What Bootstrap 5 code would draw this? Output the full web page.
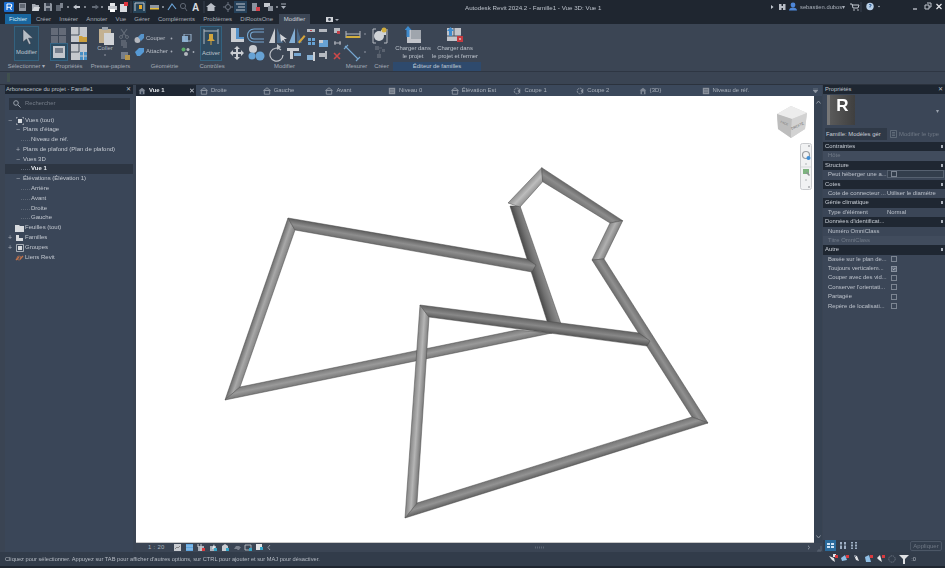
<!DOCTYPE html>
<html lang="fr">
<head>
  <meta charset="UTF-8" />
  <meta name="viewport" content="width=device-width, initial-scale=1.0" />
  <title>Autodesk Revit 2024.2 - Famille1 - Vue 3D: Vue 1</title>
  <link href="https://cdn.jsdelivr.net/npm/bootstrap@5.3.0/dist/css/bootstrap.min.css" rel="stylesheet">
  <style>
    html, body { height: 100%; }
    body {
      width: 945px; height: 568px; overflow: hidden; margin: 0;
      background: #3a4453; color: #c9ced6;
      font: 5.9px/1 "Liberation Sans", "Open Sans", sans-serif;
      filter: blur(.3px);
    }
    svg { display: block; flex: none; }
    /* Title bar + menu */
    .title-bar { height: 14px; background: #1f2630; }
    .qat-strip { width: 300px; height: 14px; }
    .app-title { position: absolute; left: 465px; top: 5px; color: #bcc2cb; font-size: 6.2px; white-space: nowrap; }
    .user-name { position: absolute; left: 800px; top: 5px; color: #a9b0ba; font-size: 5.8px; }
    .menu-bar { height: 10px; background: #1f2630; padding-left: 5px; }
    .menu-tab { height: 10px; line-height: 10px; color: #a8aeb8; white-space: nowrap; font-size: 6px; }
    .menu-file { width: 26px; background: #19669f; color: #d8e6f2; text-align: center; margin-right: 5px; }
    .menu-list { gap: 8.3px; }
    .menu-active { width: 31px; background: #3b4554; color: #ccd1d8; text-align: center; margin-left: 6px; }
    /* Ribbon */
    .ribbon { height: 47px; background: #3b4554; padding-left: 5px; }
    .rb-group { display: flex; flex-direction: column; flex: none; }
    .rb-body { height: 38px; position: relative; }
    .rb-body svg { opacity: .88; }
    .rb-label { height: 9px; line-height: 9px; text-align: center; color: #a4abb6; white-space: nowrap; }
    .rb-label-blue { background: #2e4a6d; color: #c0cad8; }
    .big-btn { position: absolute; top: 2px; height: 35px; background: #2f4a5f; border: 1px solid #33627f; color: #bfc6cf; text-align: center; }
    .big-btn svg { margin: 1px auto 0; }
    .geo-row { height: 13px; padding-left: 3px; color: #b8bec7; }
    .geo-row span { width: 24px; margin-left: 1px; }
    .load-btn { position: absolute; top: 2px; text-align: center; color: #bcc3cc; line-height: 8px; white-space: nowrap; }
    .load-btn svg { margin: 0 auto 1px; }
    .option-bar { height: 13px; background: #3a4453; border-top: 1px solid #2e3643; }
    .option-stub { width: 3px; height: 9px; margin: 1px 0 0 7px; background: #40504e; }
    .band-dark { height: 1px; background: #2b323d; }
    /* Work area */
    .work-area { height: 467px; padding-left: 5px; }
    .panel-head { height: 9px; line-height: 9px; background: #1e2631; color: #bcc2cb; padding: 0 2px 0 1px; font-size: 5.8px; }
    .panel-left { width: 128px; background: #3a4658; margin-right: 3px; }
    .search-box { height: 12px; margin: 4px 3px 5.5px 4px; background: #2c3542; color: #757d89; padding-left: 4px; gap: 4px; }
    .tree-list { margin: 0; padding: 0; list-style: none; }
    .tree-row { height: 9.8px; line-height: 9.8px; position: relative; color: #c3c8d0; white-space: nowrap; font-size: 6px; }
    .tree-row .expander { position: absolute; top: 0; color: #aab0ba; font-size: 7px; }
    .tree-row svg { position: absolute; top: 1px; }
    .lv0 { padding-left: 20px; }
    .lv1 { padding-left: 18px; }
    .lv2 { padding-left: 26px; }
    .lv2::before { content: ""; position: absolute; left: 16px; width: 9px; top: 5px; border-top: 1px dotted #5d6776; }
    .tree-current { background: #2d3643; color: #e8ebef; font-weight: 700; }
    /* Centre */
    .centre-col { width: 686px; margin-right: 1px; }
    .tab-row { height: 11px; background: #3b485b; }
    .view-tab { width: 62.7px; padding-left: 2px; gap: 3px; color: #a9b0ba; white-space: nowrap; }
    .view-tab-active { width: 60px; background: #1f2733; color: #e4e7eb; font-weight: 700; margin-right: 2px; position: relative; }
    .tab-close { position: absolute; right: 1px; top: 2px; color: #c9ced6; font-weight: 400; font-size: 7px; }
    .canvas-row { height: 447px; }
    .model-canvas { width: 678px; height: 447px; background: #fff; position: relative; border-bottom: 1px solid #c8c8c8; }
    .model-canvas > svg { position: absolute; left: 0; top: 0; }
    .view-cube { left: 640px !important; top: 9px !important; }
    .nav-bar { left: 664px !important; top: 47px !important; }
    .v-scroll { width: 8px; background: #364252; }
    .view-bar { height: 9px; background: #3b4554; color: #aeb5bf; }
    .scale-text { width: 37px; padding-left: 12px; letter-spacing: .3px; }
    /* Properties */
    .panel-right { width: 122px; background: #3b4657; }
    .props-title { padding-left: 1px; }
    .preview-box { height: 34px; position: relative; }
    .preview-r { position: absolute; left: 4px; top: 1px; width: 28px; height: 30px; background: linear-gradient(90deg, #777 0, #777 3px, #5a5a5a 3px, #3f3f3f 100%); color: #fff; font: 700 17px/22px "Liberation Sans", sans-serif; text-align: center; padding-left: 3px; }
    .preview-caret { position: absolute; right: 6px; top: 15px; color: #99a1ad; }
    .type-row { height: 12px; margin: 0 0 2px 2px; }
    .type-select { width: 62px; background: #2f3947; color: #c9ced6; line-height: 12px; padding-left: 1px; white-space: nowrap; }
    .type-edit { color: #6f7885; line-height: 12px; padding-left: 3px; white-space: nowrap; gap: 2px; }
    .prop-section { height: 9.4px; line-height: 9.4px; background: #1f2732; color: #c9ced6; padding-left: 2px; position: relative; white-space: nowrap; }
    .prop-section::after { content: ""; position: absolute; right: 2px; top: 3px; width: 2px; height: 3px; background: #aab0ba; }
    .prop-row { height: 9.4px; line-height: 9.4px; padding-left: 5px; color: #bcc2cb; white-space: nowrap; }
    .prop-name { width: 59px; flex: none; }
    .prop-dim { color: #727b88; background: #414c5d; }
    .prop-input { width: 57px; height: 8px; background: #333e4c; border: 1px solid #566170; padding-left: 1px; }
    .form-check-input[type=checkbox].prop-check { width: 6px; height: 6px; margin: 1.5px 0 0 4px; border: 1px solid #7c8592; border-radius: 0; background-color: transparent; }
    .form-check-input[type=checkbox].prop-inner { margin: 0 0 0 2px; }
    .form-check-input[type=checkbox].prop-check:checked { background-color: #5a6576; border-color: #8a93a0; }
    .prop-fill { flex: 1 1 auto; }
    .prop-foot { height: 12px; background: #333e4d; padding: 0 3px 0 2px; }
    .apply-btn { width: 32px; height: 10px; line-height: 8px; border: 1px solid #4c5766; border-radius: 2px; color: #6f7885; text-align: center; background: transparent; padding: 0; font-size: 6px; margin-top: 1px; }
    .status-bar { height: 14px; line-height: 14px; background: #323c4a; color: #b5bbc4; padding-left: 5px; font-size: 5.7px; }
    .status-zero { margin-left: -6px; padding-right: 29px; }
    .bottom-edge { height: 2px; background: #1f2630; }
  </style>
</head>
<body class="d-flex flex-column position-relative">

  <svg width="0" height="0" class="position-absolute">
    <symbol id="ic-elev" viewBox="0 0 8 8"><path d="M4 .8 7.4 3.4H.6zM1.3 3.4h5.4v3.8H1.3z" fill="none" stroke="#8d95a1" stroke-width=".9"/></symbol>
    <symbol id="ic-plan" viewBox="0 0 8 8"><path d="M.8.8h6.4v6.4H.8z" fill="#8b929d"/><path d="M2 2.5h4M2 4h4M2 5.5h4" stroke="#596270" stroke-width=".6"/></symbol>
    <symbol id="ic-sect" viewBox="0 0 8 8"><path d="M1.2 4a2.8 2.8 0 1 0 5.6 0 2.8 2.8 0 1 0-5.6 0" fill="none" stroke="#8d95a1" stroke-width=".9" stroke-dasharray="2 .8"/><path d="M7.2 1.2 4.6 4l2.6 2.8" fill="#8d95a1"/></symbol>
    <symbol id="ic-3d" viewBox="0 0 8 8"><path d="M4 .8 7.4 3.4H6.5v3.8h-5V3.4H.6z" fill="#7f8794"/><path d="M3 4.4h2v2.8H3z" fill="#3b485b"/></symbol>
  </svg>

  <!-- Title bar -->
  <div class="title-bar d-flex">
    <svg class="qat-strip" viewBox="0 0 300 14">
      <rect x="4" y="2" width="10" height="10" rx="1" fill="#1c6fd0"/><path d="M7 4h3a1.5 1.5 0 0 1 0 3.4L11.5 10M7 4v6M7 7.3h3" fill="none" stroke="#fff" stroke-width="1.1"/>
      <path d="M19 3h7v8h-7z" fill="#8f96a1"/><path d="M20 5h5M20 7h5" stroke="#333b47"/>
      <path d="M32 4h3l1 1h3v6h-7z" fill="#a6acb5"/><path d="M32 11l2-4h6l-1.500 4z" fill="#d2d5da"/>
      <path d="M44 3h7l1 1v7h-8z" fill="#8f96a1"/><path d="M46 3h4v3h-4zM46 8h4v3h-4z" fill="#3b4452"/>
      <path d="M56 5h5v6h-5z" fill="#5e6672"/><path d="M60 3h3v5h-3z" fill="#7b828d"/>
      <circle cx="68" cy="7" r=".9" fill="#aab0ba"/>
      <path d="M73 7l3.500-2.500V6h3.500v2h-3.500v1.500z" fill="#c3c8d0"/><circle cx="85" cy="7" r=".9" fill="#aab0ba"/>
      <path d="M99 7l-3.500-2.500V6H92v2h3.500v1.500z" fill="#626a76"/><circle cx="102" cy="7" r=".9" fill="#aab0ba"/>
      <path d="M108 6h9v4h-9z" fill="#c4c8ce"/><path d="M110 3h5v3h-5z" fill="#e6e8eb"/><path d="M110 9h5v3h-5z" fill="#fff"/>
      <path d="M120 4h7v8h-7z" fill="#d9dbdf"/><path d="M124 2h4v4h-4z" fill="#e0333c"/>
      <path d="M131 1v12" stroke="#39414e"/>
      <rect x="133" y="1" width="13" height="12" fill="#254358"/><path d="M135 3h9M135 3v8M144 3v8" stroke="#c3c8d0" fill="none"/><path d="M139 5h3v4h-3z" fill="#e9a928"/>
      <path d="M150 5h9v4h-9z" fill="#8d95a1"/><path d="M150 8h9v1.500h-9z" fill="#e7bd3c"/><circle cx="163" cy="7" r=".9" fill="#aab0ba"/>
      <path d="M168 10l4-6 4 5" fill="none" stroke="#6aa3d6" stroke-width="1.200"/>
      <circle cx="183" cy="6" r="2.600" fill="none" stroke="#5f6773"/><path d="M185 8l2 3" stroke="#5f6773"/>
      <text x="192" y="11" fill="#d6d9de" font-family="Liberation Sans, sans-serif" font-size="10" font-weight="700">A</text>
      <path d="M204 1v12" stroke="#39414e"/>
      <path d="M206 7l5-4 5 4h-1.500v4h-7V7z" fill="#b9bec6"/><path d="M223 7h2M231 7h2M228 2v2M228 10v2" stroke="#6e7683"/><circle cx="228" cy="7" r="2.500" fill="none" stroke="#6e7683"/>
      <rect x="234" y="1" width="13" height="12" fill="#25415a"/><path d="M236 4h9M238 7h7M236 10h9" stroke="#c3c8d0"/>
      <path d="M252 3h5v8h-5z" fill="#8b929d"/><path d="M256 7h4v4h-4z" fill="#d4414a"/>
      <path d="M264 3h6v4h-6z" fill="#c4c8ce"/><path d="M268 6h5v5h-5z" fill="#8b929d"/><circle cx="277" cy="7" r=".9" fill="#aab0ba"/>
      <path d="M281 4h5" stroke="#aab0ba"/><path d="M281 6h5l-2.500 3z" fill="#aab0ba"/>
    </svg>
    <span class="app-title">Autodesk Revit 2024.2 - Famille1 - Vue 3D: Vue 1</span>
    <svg class="position-absolute" style="left:770px;top:0" width="175" height="14" viewBox="770 0 175 14">
      <path d="M771 5l2.500 2-2.500 2z" fill="#c3c8d0"/>
      <path d="M779 4h2.500v6H779zM783 4h2.500v6H783zM781 6h2v2h-2z" fill="#b9bec6"/>
      <circle cx="793" cy="5" r="2.400" fill="#4d86d8"/><path d="M789 10.500c0-4 8-4 8 0z" fill="#4d86d8"/>
      <path d="M850 4h2l1 4h5l1-3h-7" fill="none" stroke="#c3c8d0"/><circle cx="854" cy="10" r=".8" fill="#c3c8d0"/><circle cx="858" cy="10" r=".8" fill="#c3c8d0"/>
      <path d="M861 2v10" stroke="#39414e"/>
      <circle cx="870" cy="6.500" r="3.700" fill="#b8cfe7"/><path d="M869 4.500h2v1.500h-1v1.500" fill="none" stroke="#2f5f95" stroke-width=".9"/>
      <circle cx="879" cy="6.500" r=".8" fill="#aab0ba"/>
      <path d="M913 9h4" stroke="#c3c8d0" stroke-width="1.300"/>
      <path d="M925 5h4v4h-4zM927 3h4v4h-2" fill="none" stroke="#c3c8d0"/>
      <path d="M936.500 4l5 5M941.500 4l-5 5" stroke="#e4e6ea" stroke-width="1.200"/>
    </svg>
    <span class="user-name">sebastien.dubos▾</span>
  </div>

  <!-- Menu tabs -->
  <nav class="menu-bar d-flex">
    <div class="menu-tab menu-file">Fichier</div>
    <div class="d-flex menu-tab menu-list">
      <span>Créer</span><span>Insérer</span><span>Annoter</span><span>Vue</span><span>Gérer</span><span>Compléments</span><span>Problèmes</span><span>DiRootsOne</span>
    </div>
    <div class="menu-tab menu-active">Modifier</div>
    <svg class="ms-3" width="13" height="10" viewBox="0 0 13 10"><path d="M0 3h7v5H0z" fill="#d0d3d8"/><circle cx="3.500" cy="5.500" r="1.400" fill="#3b4452"/><path d="M9 5h4l-2 2z" fill="#aab0ba"/></svg>
  </nav>

  <!-- Ribbon -->
  <div class="ribbon d-flex">
    <div class="rb-group" style="width:43px">
      <div class="rb-body">
        <div class="big-btn" style="left:9px;width:25px">
          <svg width="14" height="18" viewBox="0 0 14 18"><path d="M3 1v13l3.500-3 2.500 5.500 2-1-2.500-5.300h4.500z" fill="#c9cdd3" stroke="#2a3340" stroke-width=".5"/></svg>
          <div class="mt-1">Modifier</div>
        </div>
      </div>
      <div class="rb-label">Sélectionner ▾</div>
    </div>

    <div class="rb-group" style="width:42px">
      <div class="rb-body">
        <svg width="42" height="38" viewBox="48 24 42 38">
          <path d="M51 28h7v7h-7zM59 28h7v7h-7zM51 36h7v7h-7zM59 36h7v7h-7z" fill="#6a717d"/>
          <path d="M71 27h16v15H71z" fill="#d9dbde"/><path d="M79 27v8M71 35h8" stroke="#4a5361"/><path d="M79 36h3l1 1h4v5h-8z" fill="#e0ad3d"/>
          <rect x="50.500" y="43.500" width="17" height="17" fill="#2c4f66" stroke="#33688a"/><path d="M53 46h12v12H53z" fill="#d8dade"/><path d="M55 48h8v5h-8z" fill="#7f8794"/>
          <path d="M71 44h16v16H71z" fill="#d9dbde"/><path d="M79 44v8M71 52h8" stroke="#4a5361"/><path d="M80 52h7v8h-7z" fill="#4a9ad4"/><path d="M83.500 52v8M80 56h7" stroke="#d9dbde"/>
        </svg>
      </div>
      <div class="rb-label">Propriétés</div>
    </div>

    <div class="rb-group" style="width:41px">
      <div class="rb-body">
        <svg width="41" height="38" viewBox="90 24 41 38">
          <path d="M99 29h12v14H99z" fill="#d6c19a"/><path d="M102 27h6v3h-6z" fill="#aab0ba"/><path d="M104 33h10v12h-10z" fill="#e6e8eb"/>
          <path d="M121 29l5 7M127 29l-5 7" stroke="#69717d" stroke-width="1.200"/><circle cx="121" cy="37" r="1.500" fill="none" stroke="#69717d"/><circle cx="127" cy="37" r="1.500" fill="none" stroke="#69717d"/>
          <path d="M121 40h5v6h-5zM123 42h4v6h-4z" fill="#5f6773"/>
          <path d="M121 52h7v7h-7z" fill="#7e8591"/><path d="M125 55h5v5h-5z" fill="#c9a24a"/>
          <text x="105" y="50" fill="#bfc6cf" font-size="5.900" font-family="Liberation Sans, sans-serif" text-anchor="middle">Coller</text>
          <circle cx="105" cy="55" r=".8" fill="#aab0ba"/>
        </svg>
      </div>
      <div class="rb-label">Presse-papiers</div>
    </div>

    <div class="rb-group" style="width:67px">
      <div class="rb-body pt-2">
        <div class="geo-row d-flex align-items-center">
          <svg width="11" height="11" viewBox="0 0 11 11"><circle cx="3.500" cy="7" r="3" fill="#c5c8cd"/><path d="M4 4l3-3h3v4l-3 3z" fill="#5a9fdb"/></svg>
          <span>Couper</span>
          <svg width="3" height="3" viewBox="0 0 3 3"><circle cx="1.500" cy="1.500" r=".9" fill="#b3b9c2"/></svg>
          <svg class="ms-2" width="11" height="10" viewBox="0 0 11 10"><path d="M1 2h6v6H1z" fill="#8fb9df"/><path d="M3 0h7v7H3z" fill="none" stroke="#a9c7e3"/></svg>
        </div>
        <div class="geo-row d-flex align-items-center">
          <svg width="11" height="11" viewBox="0 0 11 11"><path d="M1 6l4-4h5v4l-4 4H3z" fill="#5aa6e6"/></svg>
          <span>Attacher</span>
          <svg width="3" height="3" viewBox="0 0 3 3"><circle cx="1.500" cy="1.500" r=".9" fill="#b3b9c2"/></svg>
          <svg class="ms-2" width="14" height="10" viewBox="0 0 14 10"><circle cx="2.500" cy="2.500" r="2" fill="#5fb86a"/><circle cx="7" cy="2.500" r="1.500" fill="#c5c8cd"/><circle cx="5" cy="7" r="2" fill="#c5c8cd"/><circle cx="12.500" cy="5" r=".9" fill="#b3b9c2"/></svg>
        </div>
      </div>
      <div class="rb-label">Géométrie</div>
    </div>

    <div class="rb-group" style="width:28px">
      <div class="rb-body">
        <div class="big-btn" style="left:2px;width:22px">
          <svg width="18" height="19" viewBox="0 0 18 19"><path d="M2 1v15M16 1v15M2 3h14" stroke="#c3c8d0" fill="none"/><path d="M7 6h4v5l2 2H5l2-2z" fill="#e9b23a"/><path d="M9 13v4" stroke="#e9b23a"/></svg>
          <div class="mt-1">Activer</div>
        </div>
      </div>
      <div class="rb-label">Contrôles</div>
    </div>

    <div class="rb-group" style="width:117px">
      <div class="rb-body">
        <svg width="117" height="38" viewBox="227 24 117 38">
          <path d="M232 28h5v9h8v5h-13z" fill="#dfe1e4"/><path d="M237 28h3v9h5v2h-8z" fill="#5a9fdb"/>
          <path d="M265 29h-10a6 6 0 0 0 0 13h10M265 32h-10a3.300 3.300 0 0 0 0 7h10" fill="none" stroke="#7fb6e4" stroke-width="1.100"/>
          <path d="M276 28v15h-6z" fill="#dfe1e4"/><path d="M278 28v15h6z" fill="#4d6f91"/><path d="M281 34l1 8 2-2 3 3-2-4h3z" fill="#e8eaed"/>
          <path d="M296 28v15h-6z" fill="#8fbfe6"/><path d="M298 28v15h5z" fill="#4d6f91"/><path d="M299 42l6-7 1.500 1.500-6 7z" fill="#e9b23a"/>
          <path d="M238 46l3 3h-2v3h3v-2l3 3-3 3v-2h-3v3h2l-3 3-3-3h2v-3h-3v2l-3-3 3-3v2h3v-3h-2z" fill="#dfe1e4"/>
          <circle cx="254" cy="49" r="4" fill="#dfe1e4"/><circle cx="261" cy="56" r="4.500" fill="#6eb0e6"/><circle cx="253" cy="56" r="3.500" fill="#6eb0e6"/>
          <path d="M282 50a6.500 6.500 0 1 0 2 5" fill="none" stroke="#cfd2d7" stroke-width="1.200"/><path d="M278 44l4 3-4 3z" fill="#cfd2d7"/>
          <path d="M288 48h12v3h-6v8h-3v-8h-3z" fill="#dfe1e4"/><path d="M295 53h7v3h-7z" fill="#7fb6e4"/>
          <path d="M308 29h8v3h-8z" fill="#c7cad0"/><path d="M311 30h2v1h-2z" fill="#d4414a"/>
          <path d="M309 38h3v3h-3zM313 38h3v3h-3zM309 42h3v3h-3zM313 42h3v3h-3z" fill="#6eb0e6"/>
          <path d="M308 55h6v5h-6z" fill="#8fbfe6"/><path d="M314 52h2v9h-2z" fill="#dfe1e4"/>
          <path d="M320 29h8v3h-8z" fill="#c7cad0"/>
          <path d="M320 40h9v7h-9z" fill="#6eb0e6"/><path d="M320 40h4v3h-4z" fill="#dfe1e4"/>
          <path d="M320 53h7v4h-7zM326 51h2v8h-2z" fill="#c7cad0"/>
          <path d="M335 28v5h6v-5z" fill="#c7cad0"/><path d="M338 31h3v3h-3z" fill="#d4414a"/>
          <path d="M335 43h7M336 41v4M341 41v4" stroke="#c7cad0"/>
          <path d="M335 53l6 6M341 53l-6 6" stroke="#e24a48" stroke-width="1.600"/>
        </svg>
      </div>
      <div class="rb-label">Modifier</div>
    </div>

    <div class="rb-group" style="width:27px">
      <div class="rb-body">
        <svg width="27" height="38" viewBox="345 24 27 38">
          <path d="M348 31v7M362 31v7M348 34h14" stroke="#c9ccd1" fill="none"/><path d="M348 36h14v2h-14z" fill="#e7bd3c"/>
          <circle cx="367" cy="34" r=".8" fill="#aab0ba"/>
          <path d="M347 46l13 13M346 49l4-4M358 61l4-4" stroke="#7fb6e4" fill="none" stroke-width="1.100"/><circle cx="367" cy="52" r=".8" fill="#aab0ba"/>
        </svg>
      </div>
      <div class="rb-label">Mesurer</div>
    </div>

    <div class="rb-group" style="width:23px">
      <div class="rb-body">
        <svg width="23" height="38" viewBox="372 24 23 38">
          <path d="M375 29v14M375 29h3M375 43h3M389 29v14M386 43h3" stroke="#c9ccd1" fill="none"/><circle cx="381" cy="36" r="5" fill="#e4e6e9"/><path d="M383 30h5v5h-5z" fill="#e4e6e9"/><circle cx="386" cy="30" r="2.500" fill="#e7bd3c"/>
          <path d="M377 46h4v4h-4zM384 49h3v3h-3zM379 54h4v4h-4z" fill="#5f6773"/><path d="M381 48h3M382 50l-1 4" stroke="#5f6773"/>
        </svg>
      </div>
      <div class="rb-label">Créer</div>
    </div>

    <div class="rb-group" style="width:88px">
      <div class="rb-body">
        <div class="load-btn" style="left:2px;width:36px">
          <svg width="16" height="17" viewBox="0 0 16 17"><path d="M2 4h14v13H2z" fill="#d5d7db"/><path d="M6 4h10v9H6z" fill="#aeb3ba"/><path d="M3 0l3.500 4H4.500v7h-3V4H-.5z" fill="#3f96e0"/></svg>
          Charger dans<br>le projet
        </div>
        <div class="load-btn" style="left:38px;width:48px">
          <svg width="16" height="17" viewBox="0 0 16 17"><path d="M0 2h14v13H0z" fill="#d5d7db"/><path d="M7 2v8M0 10h14" stroke="#4a5361"/><path d="M3.500 1 7 5H5v5H2V5H0z" fill="#3f96e0"/><path d="M10 10h6v6h-6z" fill="#d93a3e"/><path d="M12 12l2 2M14 12l-2 2" stroke="#fff" stroke-width=".6"/></svg>
          Charger dans<br>le projet et fermer
        </div>
      </div>
      <div class="rb-label rb-label-blue">Éditeur de familles</div>
    </div>
  </div>

  <div class="option-bar"><div class="option-stub"></div></div>
  <div class="band-dark"></div>

  <div class="work-area d-flex">
    <!-- Project browser -->
    <aside class="panel-left d-flex flex-column">
      <div class="panel-head d-flex justify-content-between"><span>Arborescence du projet - Famille1</span><span>✕</span></div>
      <div class="search-box d-flex align-items-center">
        <svg width="8" height="8" viewBox="0 0 8 8"><circle cx="3" cy="3" r="2.300" fill="none" stroke="#9aa2ad"/><path d="M5 5l2.500 2.500" stroke="#9aa2ad"/></svg>
        <span>Rechercher</span>
      </div>
      <ul class="tree-list">
        <li class="tree-row lv0"><span class="expander" style="left:3px">−</span><svg style="left:11px" width="8" height="8" viewBox="0 0 8 8"><path d="M2 2h4v4H2z" fill="#d7dade"/><path d="M0 2V0h2M6 0h2v2M8 6v2H6M2 8H0V6" fill="none" stroke="#d7dade" stroke-width=".7"/></svg>Vues (tout)</li>
        <li class="tree-row lv1"><span class="expander" style="left:11px">−</span>Plans d'étage</li>
        <li class="tree-row lv2">Niveau de réf.</li>
        <li class="tree-row lv1"><span class="expander" style="left:11px">+</span>Plans de plafond (Plan de plafond)</li>
        <li class="tree-row lv1"><span class="expander" style="left:11px">−</span>Vues 3D</li>
        <li class="tree-row lv2 tree-current">Vue 1</li>
        <li class="tree-row lv1"><span class="expander" style="left:11px">−</span>Élévations (Élévation 1)</li>
        <li class="tree-row lv2">Arrière</li>
        <li class="tree-row lv2">Avant</li>
        <li class="tree-row lv2">Droite</li>
        <li class="tree-row lv2">Gauche</li>
        <li class="tree-row lv0"><svg style="left:10px" width="9" height="8" viewBox="0 0 9 8"><path d="M0 1h4l1 1h4v6H0z" fill="#d7dade"/></svg>Feuilles (tout)</li>
        <li class="tree-row lv0"><span class="expander" style="left:3px">+</span><svg style="left:11px" width="8" height="8" viewBox="0 0 8 8"><path d="M0 1h3v3h4v3H0z" fill="#d7dade"/></svg>Familles</li>
        <li class="tree-row lv0"><span class="expander" style="left:3px">+</span><svg style="left:11px" width="8" height="8" viewBox="0 0 8 8"><path d="M.5.500h7v7h-7z" fill="none" stroke="#d7dade" stroke-width=".7"/><path d="M2 2h4v4H2z" fill="#d7dade"/></svg>Groupes</li>
        <li class="tree-row lv0"><svg style="left:10px" width="9" height="8" viewBox="0 0 9 8"><path d="M1 6l3-3M5 5l3-3" stroke="#c2734a" stroke-width="1.400"/><circle cx="4" cy="4" r="2" fill="none" stroke="#c2734a" stroke-width=".7"/></svg>Liens Revit</li>
      </ul>
    </aside>

    <!-- Central view -->
    <main class="centre-col d-flex flex-column">
      <div class="tab-row d-flex align-items-center">
        <div class="view-tab view-tab-active d-flex align-items-center h-100">
          <svg width="8" height="8"><use href="#ic-3d"/></svg><span>Vue 1</span><span class="tab-close">✕</span>
        </div>
        <div class="view-tab d-flex align-items-center"><svg width="8" height="8"><use href="#ic-elev"/></svg><span>Droite</span></div>
        <div class="view-tab d-flex align-items-center"><svg width="8" height="8"><use href="#ic-elev"/></svg><span>Gauche</span></div>
        <div class="view-tab d-flex align-items-center"><svg width="8" height="8"><use href="#ic-elev"/></svg><span>Avant</span></div>
        <div class="view-tab d-flex align-items-center"><svg width="8" height="8"><use href="#ic-plan"/></svg><span>Niveau 0</span></div>
        <div class="view-tab d-flex align-items-center"><svg width="8" height="8"><use href="#ic-elev"/></svg><span>Élévation Est</span></div>
        <div class="view-tab d-flex align-items-center"><svg width="8" height="8"><use href="#ic-sect"/></svg><span>Coupe 1</span></div>
        <div class="view-tab d-flex align-items-center"><svg width="8" height="8"><use href="#ic-sect"/></svg><span>Coupe 2</span></div>
        <div class="view-tab d-flex align-items-center"><svg width="8" height="8"><use href="#ic-3d"/></svg><span>{3D}</span></div>
        <div class="view-tab d-flex align-items-center"><svg width="8" height="8"><use href="#ic-plan"/></svg><span>Niveau de réf.</span></div>
        <svg class="ms-auto me-1" width="5" height="5" viewBox="0 0 5 5"><path d="M0 0h5M0 2l2.500 3L5 2z" fill="#8d95a1" stroke="#8d95a1" stroke-width=".5"/></svg>
      </div>
      <div class="canvas-row d-flex">
        <div class="model-canvas">
          <svg id="tubes" width="678" height="447" viewBox="136 96 678 447"></svg>
          <svg class="view-cube" width="32" height="34" viewBox="0 0 32 34">
            <path d="M15 1 31 8 29 24 15 33 2 24 1 9z" fill="#d8d8d8"/>
            <path d="M15 1 31 8 16 14 1 9z" fill="#ececec"/><path d="M1 9 16 14 15 33 2 24z" fill="#bdbdbd"/><path d="M16 14 31 8 29 24 15 33z" fill="#d2d2d2"/>
            <text x="22" y="22" font-size="3.600" fill="#666" text-anchor="middle" font-family="Liberation Sans, sans-serif" transform="rotate(-24 22 22)">DROITE</text>
            <text x="8" y="19" font-size="3" fill="#777" text-anchor="middle" font-family="Liberation Sans, sans-serif" transform="rotate(22 8 19)">FACE</text>
          </svg>
          <svg class="nav-bar" width="12" height="47" viewBox="0 0 12 47">
            <rect x=".5" y=".5" width="11" height="46" rx="2" fill="#f1f2f3" stroke="#c9cbce"/>
            <circle cx="9" cy="3" r="1" fill="#a8abaf"/>
            <circle cx="6" cy="12" r="3.500" fill="none" stroke="#9a9da1" stroke-width="1.200"/><circle cx="8.500" cy="15" r="2" fill="#3f8ed6"/>
            <circle cx="6" cy="21" r=".7" fill="#9a9da1"/><path d="M1 24h10" stroke="#d5d7d9"/>
            <path d="M3 26h6v5H3z" fill="#7db37f"/><path d="M7 29l3 3-1 1-3-3z" fill="#8d9094"/>
            <circle cx="6" cy="37" r=".7" fill="#9a9da1"/><circle cx="9" cy="44" r="1" fill="#a8abaf"/>
          </svg>
        </div>
        <div class="v-scroll d-flex flex-column justify-content-between align-items-center py-1">
          <svg width="5" height="4" viewBox="0 0 5 4"><path d="M.5 3.500 2.500 1l2 2.500" fill="none" stroke="#8d95a1"/></svg>
          <svg width="5" height="4" viewBox="0 0 5 4"><path d="M.5.500 2.500 3l2-2.500" fill="none" stroke="#8d95a1"/></svg>
        </div>
      </div>
      <div class="view-bar d-flex align-items-center">
        <span class="scale-text">1 : 20</span>
        <svg width="104" height="9" viewBox="173 0 104 9">
          <path d="M174 1h7v7h-7z" fill="#c9ccd1"/><path d="M175 6l2-2 1 1 2-2" stroke="#555" fill="none" stroke-width=".6"/>
          <path d="M186 1h7v7h-7z" fill="#5fa6e0"/><path d="M186 3h7M186 6h7" stroke="#cfe3f5" stroke-width=".6"/>
          <path d="M198 3h6v5h-6z" fill="#aab0ba"/><path d="M201 1v7M198 1v3" stroke="#cfd2d7"/><path d="M202 5h3v3h-3z" fill="#d93a3e"/>
          <path d="M210 3h6v5h-6z" fill="#aab0ba"/><path d="M214 1l1 4-3 1z" fill="#e6e8eb"/><path d="M214 5h3v3h-3z" fill="#35a6c9"/>
          <path d="M222 3l3-2 3 2v5h-6z" fill="#c9ccd1"/><path d="M226 5h3v3h-3z" fill="#35a6c9"/>
          <path d="M234 6l2-3h4l-2 3zM237 7l2-3h2l-2 3z" fill="#7a818d"/>
          <path d="M245 2h6v5h-6z" fill="none" stroke="#c9ccd1" stroke-width=".8"/><path d="M249 5h3v3h-3z" fill="#35a6c9"/>
          <path d="M256 1h6v6h-6z" fill="#e2e4e7"/><path d="M260 4h3v3h-3z" fill="#35a6c9"/>
          <path d="M270 2 268 4.500l2 2.500" fill="none" stroke="#a4abb6" stroke-width=".8"/>
        </svg>
        <svg class="position-absolute" style="left:534px;top:544px" width="12" height="7" viewBox="0 0 12 7"><path d="M1 3.500h10" stroke="#5d6674" stroke-width="2" stroke-dasharray="1 1"/></svg>
        <svg class="ms-auto" width="14" height="9" viewBox="0 0 14 9"><path d="M0 1.500 2.500 4.500 0 7.500" fill="none" stroke="#8d95a1" transform="translate(-1)"/><path d="M13 3v5H9M11 8V6" fill="none" stroke="#5d6674"/></svg>
      </div>
    </main>

    <!-- Properties -->
    <aside class="panel-right d-flex flex-column">
      <div class="panel-head d-flex justify-content-between"><span class="props-title">Propriétés</span><span>✕</span></div>
      <div class="preview-box"><div class="preview-r">R</div><span class="preview-caret">▾</span></div>
      <div class="type-row d-flex">
        <div class="type-select d-flex justify-content-between"><span>Famille: Modèles gér</span></div>
        <div class="type-edit d-flex align-items-center"><svg width="7" height="8" viewBox="0 0 7 8"><path d="M.5.500h6v7h-6zM2 2.500h3M2 4h3M2 5.500h3" fill="none" stroke="#6f7885" stroke-width=".7"/></svg><span>Modifier le type</span></div>
      </div>
      <div class="prop-section">Contraintes</div>
      <div class="prop-row prop-dim">Hôte</div>
      <div class="prop-section">Structure</div>
      <div class="prop-row d-flex"><span class="prop-name">Peut héberger une a...</span><span class="prop-input"><input type="checkbox" class="form-check-input d-block prop-check prop-inner"></span></div>
      <div class="prop-section">Cotes</div>
      <div class="prop-row d-flex"><span class="prop-name">Cote de connecteur ...</span><span>Utiliser le diamètre</span></div>
      <div class="prop-section">Génie climatique</div>
      <div class="prop-row d-flex"><span class="prop-name">Type d'élément</span><span>Normal</span></div>
      <div class="prop-section">Données d'identificat...</div>
      <div class="prop-row">Numéro OmniClass</div>
      <div class="prop-row prop-dim">Titre OmniClass</div>
      <div class="prop-section">Autre</div>
      <div class="prop-row d-flex"><span class="prop-name">Basée sur le plan de...</span><input type="checkbox" class="form-check-input prop-check"></div>
      <div class="prop-row d-flex"><span class="prop-name">Toujours verticalem...</span><input type="checkbox" class="form-check-input prop-check" checked></div>
      <div class="prop-row d-flex"><span class="prop-name">Couper avec des vid...</span><input type="checkbox" class="form-check-input prop-check"></div>
      <div class="prop-row d-flex"><span class="prop-name">Conserver l'orientati...</span><input type="checkbox" class="form-check-input prop-check"></div>
      <div class="prop-row d-flex"><span class="prop-name">Partagée</span><input type="checkbox" class="form-check-input prop-check"></div>
      <div class="prop-row d-flex"><span class="prop-name">Repère de localisati...</span><input type="checkbox" class="form-check-input prop-check"></div>
      <div class="prop-fill"></div>
      <div class="prop-foot d-flex justify-content-between">
        <svg width="34" height="11" viewBox="0 0 34 11">
          <rect width="11" height="11" fill="#2a6b9c"/><path d="M2 3h3v2H2zM6 3h3v2H6zM2 6h3v2H2zM6 6h3v2H6z" fill="#cfe3f5"/>
          <path d="M15 2h2v7h-2zM19 2h2v7h-2z" fill="#9fb0c4"/><path d="M15 5h6" stroke="#333e4d"/>
          <path d="M26 2h2v7h-2zM30 2h2v7h-2z" fill="#9fb0c4"/><path d="M26 4h6M26 7h6" stroke="#333e4d"/>
        </svg>
        <button type="button" class="btn apply-btn">Appliquer</button>
      </div>
    </aside>
  </div>

  <!-- Status bar -->
  <footer class="status-bar d-flex justify-content-between">
    <span>Cliquez pour sélectionner. Appuyez sur TAB pour afficher d'autres options, sur CTRL pour ajouter et sur MAJ pour désactiver.</span>
    <div class="d-flex">
      <svg width="90" height="14" viewBox="830 0 90 14">
        <path d="M832 4l5 2 1 4-3-2zM836 2h3v3h-3z" fill="#e2e4e7"/><path d="M838 3h3v3h-3z" fill="#d93a3e"/>
        <path d="M844 6l4-3 2 5-5 1z" fill="#8fbfe6"/><path d="M849 3h3v3h-3z" fill="#d93a3e"/>
        <path d="M857 3l3 1 2 5-3-1z" fill="#e2e4e7"/><path d="M857 3h2v2h-2z" fill="#7d8591"/>
        <path d="M868 5l4-2 2 7h-5z" fill="#8fbfe6"/><path d="M873 3h3v3h-3z" fill="#d93a3e"/>
        <path d="M880 6l3-3 2 7-3-2z" fill="#e2e4e7"/><path d="M885 3h3v3h-3z" fill="#d93a3e"/>
        <circle cx="895" cy="7" r="3.200" fill="none" stroke="#6b7380" stroke-dasharray="1.500 .7"/>
        <path d="M902 3h10l-4 4v5h-2V7z" fill="#dfe1e4"/>
      </svg>
      <span class="status-zero">:0</span>
    </div>
  </footer>
  <div class="bottom-edge"></div>

  <script src="https://cdn.jsdelivr.net/npm/bootstrap@5.3.0/dist/js/bootstrap.bundle.min.js"></script>
  <script>
    // Tubes of the 3D view: edge a (2 pts), edge b (2 pts), colours across the section
    const tubes = [
      [[288,218],[225,400],[295,230],[240,387],['#6e6e6e','#a8a8a8','#848484']],
      [[240,387],[517,330],[225,400],[552,333],['#787878','#9a9a9a','#777']],
      [[510,206],[548,324],[520,206],[561,324],['#4a4a4a','#707070','#8a8a8a']],
      [[288,218],[527,259],[295,230],[532,272],['#5e5e5e','#8e8e8e','#6c6c6c']],
      [[508,203],[541.7,167.7],[520,207],[542.7,181.7],['#929292','#bdbdbd','#969696']],
      [[541.7,167.7],[622.7,220.7],[542.7,181.7],[610,223],['#686868','#8c8c8c','#767676']],
      [[610,223],[592,260],[622.7,220.7],[604,259],['#868686','#b0b0b0','#828282']],
      [[592,260],[692,417],[604,259],[708,423],['#6c6c6c','#909090','#727272']],
      [[692,417],[417,503],[708,423],[405,518],['#747474','#939393','#636363']],
      [[420,305],[405,518],[429,317],[417,503],['#858585','#b5b5b5','#7a7a7a']],
      [[420,305],[639,333],[429,317],[647,346],['#626262','#888','#565656']]
    ];
    const NS = 'http://www.w3.org/2000/svg';
    const tubeSvg = document.getElementById('tubes');
    const defs = document.createElementNS(NS, 'defs');
    tubeSvg.appendChild(defs);

    tubes.forEach(([a1, a2, b1, b2, cols], i) => {
      const dx = a2[0] - a1[0], dy = a2[1] - a1[1], len = Math.hypot(dx, dy);
      const nx = -dy / len, ny = dx / len;
      const mx = (a1[0] + a2[0]) / 2, my = (a1[1] + a2[1]) / 2;
      const w = ((b1[0] + b2[0]) / 2 - mx) * nx + ((b1[1] + b2[1]) / 2 - my) * ny;

      const grad = document.createElementNS(NS, 'linearGradient');
      grad.id = 'tube' + i;
      grad.setAttribute('gradientUnits', 'userSpaceOnUse');
      grad.setAttribute('x1', mx); grad.setAttribute('y1', my);
      grad.setAttribute('x2', mx + nx * w); grad.setAttribute('y2', my + ny * w);
      cols.forEach((c, k) => {
        const stop = document.createElementNS(NS, 'stop');
        stop.setAttribute('offset', k / 2);
        stop.setAttribute('stop-color', c);
        grad.appendChild(stop);
      });
      defs.appendChild(grad);

      const poly = document.createElementNS(NS, 'polygon');
      const pts = [a1, a2, b2, b1];
      // last tube has a rounded-off free end
      if (i === tubes.length - 1) pts.splice(2, 0, [650, 341]);
      if (i === 3) pts.splice(2, 0, [536, 265]);
      poly.setAttribute('points', pts.map(p => p.join(',')).join(' '));
      poly.setAttribute('fill', 'url(#tube' + i + ')');
      poly.setAttribute('stroke', '#4a4a4a');
      poly.setAttribute('stroke-width', '.5');
      tubeSvg.appendChild(poly);
    });
  </script>
</body>
</html>
